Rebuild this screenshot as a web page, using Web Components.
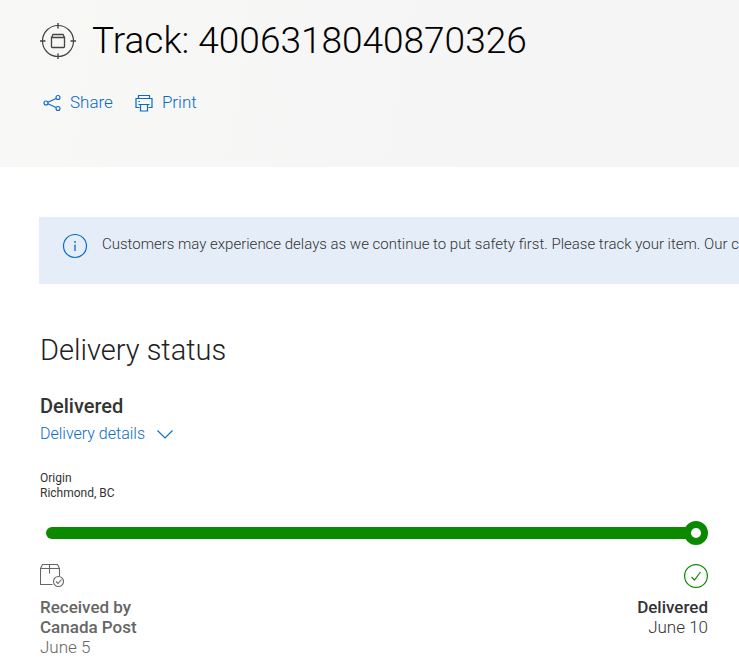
<!DOCTYPE html>
<html lang="en">
<head>
<meta charset="utf-8">
<meta name="viewport" content="width=device-width, initial-scale=1">
<title>Track: 4006318040870326</title>
<style>
  body {
    margin: 0;
    background: #fff;
    color: #333;
    font-family: Roboto, "Liberation Sans", sans-serif;
    font-size: 16px;
    font-weight: 300;
    line-height: 20px;
  }
</style>
</head>
<body>

<track-header number="4006318040870326">
  <track-action icon="share">Share</track-action>
  <track-action icon="print">Print</track-action>
</track-header>

<main>
  <track-notice>Customers may experience delays as we continue to put safety first. Please track your item. Our c</track-notice>

  <delivery-status heading="Delivery status" status="Delivered">
    <span slot="details">Delivery details</span>
    <progress-track slot="progress" value="100">
      <span slot="origin">Origin<br>Richmond, BC</span>
      <track-step slot="steps" icon="parcel" date="June 5">Received by<br>Canada Post</track-step>
      <track-step slot="steps" icon="check" date="June 10" current>Delivered</track-step>
    </progress-track>
  </delivery-status>
</main>

<script>
"use strict";

const icons = {
  target: `
    <svg width="36" height="36" viewBox="0 0 36 36" fill="none" stroke="#444" aria-hidden="true">
      <circle cx="18" cy="18" r="15.5" stroke-width="1.2"/>
      <path d="M18 0v5.500M18 30.500V36M0 18h5.500M30.500 18H36" stroke-width="1.400"/>
      <path d="M11.500 14.500h13v9.200q0 .8-.8.8H12.300q-.8 0-.8-.8zM11.500 14.500l1.500-3h10l1.500 3" stroke-width="1.300"/>
    </svg>`,
  share: `
    <svg width="18" height="18" viewBox="0 0 18 18" fill="none" stroke="currentColor" stroke-width="1.100" aria-hidden="true">
      <circle cx="3" cy="9" r="2"/>
      <circle cx="15" cy="3.500" r="2"/>
      <circle cx="15" cy="14.500" r="2"/>
      <path d="M4.900 8.200l8.200-3.800M4.900 9.800l8.200 3.800"/>
    </svg>`,
  print: `
    <svg width="18" height="18" viewBox="0 0 18 18" fill="none" stroke="currentColor" stroke-width="1.200" aria-hidden="true">
      <path d="M3.500 4.500v-3h11v3M4.500 13.500h-3.500v-9h16v9h-3.500"/>
      <path d="M5.500 10.500h7v6.500h-7zM3.500 10.500h11M3.500 7.500h1.500"/>
    </svg>`,
  info: `
    <svg width="26" height="26" viewBox="0 0 26 26" fill="none" stroke="#0a6bc8" aria-hidden="true">
      <circle cx="13" cy="13" r="11.500" stroke-width="1.200"/>
      <path d="M13 11.500v6.500M13 8v2" stroke-width="1.300"/>
    </svg>`,
  chevron: `
    <svg width="16" height="10" viewBox="0 0 16 10" fill="none" stroke="currentColor" stroke-width="1.100" aria-hidden="true">
      <path d="M.5 1.500L8 9 15.500 1.500"/>
    </svg>`,
  parcel: `
    <svg width="24" height="24" viewBox="0 0 24 24" fill="none" stroke="#666" stroke-width="1.100" aria-hidden="true">
      <path d="M12.500 20.500H.5v-16h19v7.500M.5 4.500l2-4h15l2 4M9.500.5v9"/>
      <circle cx="18.500" cy="17.500" r="5"/>
      <path d="M16 17.500l2 2 3.500-4"/>
    </svg>`,
  check: `
    <svg width="24" height="24" viewBox="0 0 24 24" fill="none" stroke="#0b8a00" stroke-width="1.200" aria-hidden="true">
      <circle cx="12" cy="12" r="11.400"/>
      <path d="M7.500 13l3 3 6-8"/>
    </svg>`
};

class TrackHeader extends HTMLElement {
  constructor() {
    super();
    this.attachShadow({ mode: 'open' });
    this.shadowRoot.innerHTML = `
      <style>
        :host {
          display: block;
          padding: 16px 40px 52px;
          background: linear-gradient(100deg, #f8f8f7, #f5f5f5 70%);
        }
        .title { display: flex; align-items: center; gap: 16px; }
        svg { flex: none; display: block; }
        h1 {
          margin: 0;
          color: #000;
          font-size: 37px;
          font-weight: 300;
          line-height: 50px;
        }
        nav { display: flex; gap: 22px; padding: 24px 3px 0; }
      </style>
      <header>
        <div class="title">${icons.target}<h1>Track: ${this.getAttribute('number')}</h1></div>
        <nav aria-label="Tracking actions"><slot></slot></nav>
      </header>
    `;
  }
}

class TrackAction extends HTMLElement {
  constructor() {
    super();
    this.attachShadow({ mode: 'open' });
    this.shadowRoot.innerHTML = `
      <style>
        :host { display: block; }
        button {
          display: flex;
          align-items: center;
          gap: 9px;
          padding: 0;
          border: 0;
          background: none;
          color: #0a6bc8;
          font: inherit;
          font-size: 17px;
          line-height: 25px;
          cursor: pointer;
        }
      </style>
      <button type="button">${icons[this.getAttribute('icon')]}<span><slot></slot></span></button>
    `;
  }
}

class TrackNotice extends HTMLElement {
  constructor() {
    super();
    this.attachShadow({ mode: 'open' });
    this.shadowRoot.innerHTML = `
      <style>
        :host {
          display: flex;
          gap: 14px;
          margin: 50px 0 0 39px;
          padding: 16px 0 25px 23px;
          overflow: hidden;
          background: #e5edf8;
        }
        svg { flex: none; display: block; }
        p {
          margin: 0;
          font-size: 15px;
          line-height: 22px;
          white-space: nowrap;
        }
      </style>
      ${icons.info}<p><slot></slot></p>
    `;
  }
}

class DeliveryStatus extends HTMLElement {
  constructor() {
    super();
    this.attachShadow({ mode: 'open' });
    this.shadowRoot.innerHTML = `
      <style>
        :host { display: block; padding: 48px 31px 6px 40px; }
        h2 {
          margin: 0;
          color: #222;
          font-size: 29px;
          font-weight: 300;
          line-height: 36px;
        }
        h3 {
          margin: 24px 0 0;
          font-size: 20px;
          font-weight: 500;
          line-height: 28px;
        }
        button {
          display: flex;
          align-items: center;
          gap: 12px;
          margin: 2px 0 0;
          padding: 0;
          border: 0;
          background: none;
          color: #0a6bc8;
          font: inherit;
          font-size: 16px;
          line-height: 24px;
          cursor: pointer;
        }
      </style>
      <section>
        <h2>${this.getAttribute('heading')}</h2>
        <h3>${this.getAttribute('status')}</h3>
        <button type="button" aria-expanded="false"><slot name="details"></slot>${icons.chevron}</button>
        <slot name="progress"></slot>
      </section>
    `;
  }
}

class ProgressTrack extends HTMLElement {
  constructor() {
    super();
    this.attachShadow({ mode: 'open' });
    this.shadowRoot.innerHTML = `
      <style>
        :host { display: block; padding-top: 25px; }
        .origin {
          font-size: 12px;
          font-weight: 400;
          line-height: 15px;
        }
        .bar {
          display: flex;
          align-items: center;
          margin: 20px 0 0 6px;
        }
        .line {
          flex: 1;
          height: 12px;
          margin-right: -6px;
          border-radius: 6px 0 0 6px;
          background: #0b8a00;
        }
        .knob {
          box-sizing: border-box;
          width: 24px;
          height: 24px;
          border: 7px solid #0b8a00;
          border-radius: 50%;
          background: #fff;
        }
        .steps {
          display: flex;
          justify-content: space-between;
          padding-top: 19px;
        }
      </style>
      <div class="origin"><slot name="origin"></slot></div>
      <div class="bar" role="progressbar" aria-label="Delivery progress" aria-valuenow="${this.getAttribute('value')}">
        <div class="line"></div>
        <div class="knob"></div>
      </div>
      <div class="steps"><slot name="steps"></slot></div>
    `;
  }
}

class TrackStep extends HTMLElement {
  constructor() {
    super();
    this.attachShadow({ mode: 'open' });
    this.shadowRoot.innerHTML = `
      <style>
        :host {
          display: flex;
          flex-direction: column;
          align-items: flex-start;
          color: #666;
          font-size: 17px;
        }
        :host([current]) { align-items: flex-end; color: #333; text-align: right; }
        svg { display: block; }
        .label { padding-top: 9px; font-weight: 500; }
      </style>
      ${icons[this.getAttribute('icon')]}
      <div class="label"><slot></slot></div>
      <div>${this.getAttribute('date')}</div>
    `;
  }
}

customElements.define('track-header', TrackHeader);
customElements.define('track-action', TrackAction);
customElements.define('track-notice', TrackNotice);
customElements.define('delivery-status', DeliveryStatus);
customElements.define('progress-track', ProgressTrack);
customElements.define('track-step', TrackStep);
</script>
</body>
</html>
